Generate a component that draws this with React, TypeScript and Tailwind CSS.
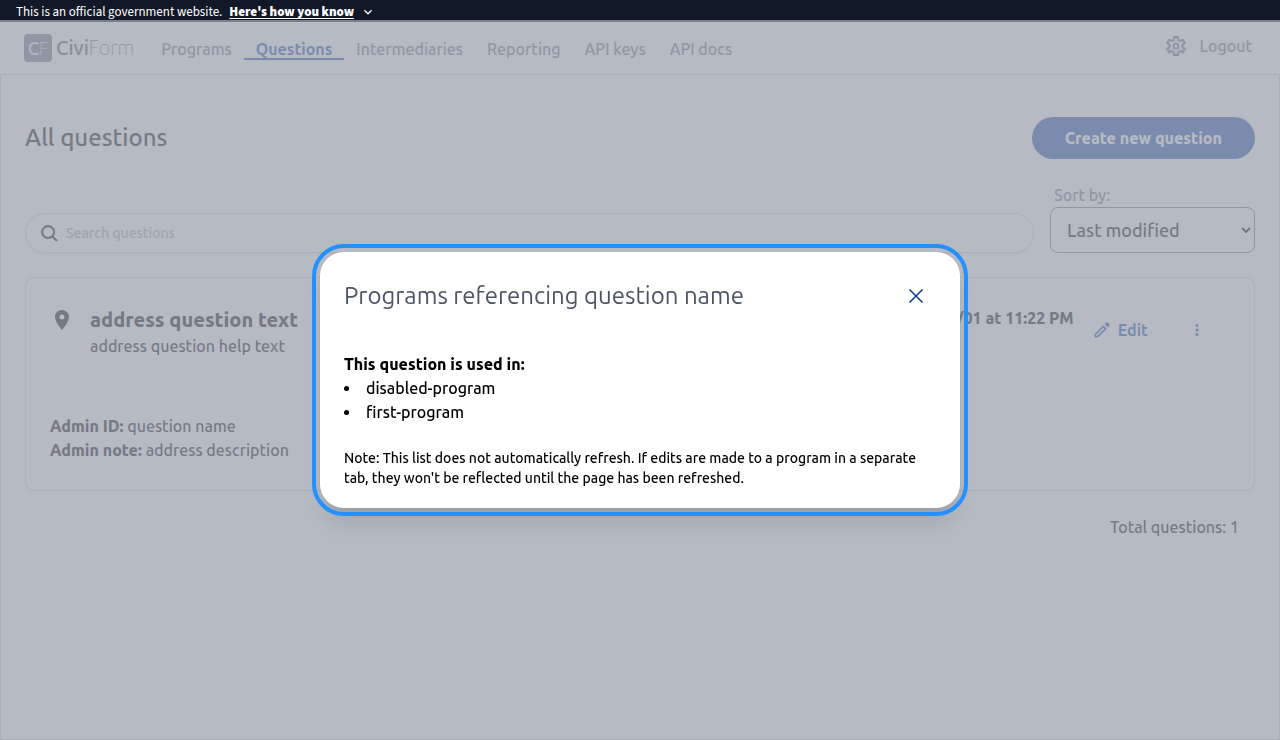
import React from "react";
import { MdPlace, MdMoreVert, MdKeyboardArrowDown } from "react-icons/md";

const NAV_ITEMS = ["Programs", "Questions", "Intermediaries", "Reporting", "API keys", "API docs"];

function GovernmentBanner() {
  return (
    <div className="flex h-[22px] items-start gap-[7px] bg-[#111827] px-4 pt-[2px] font-['Source_Sans_Pro','Source_Sans_3','Noto_Sans_CJK_SC',sans-serif] text-[13px] leading-[20px] font-normal text-white">
      <span>This is an official government website.</span>
      <button type="button" className="flex items-center gap-[6px] font-black">
        <span className="underline underline-offset-2">Here's how you know</span>
        <MdKeyboardArrowDown className="size-4" />
      </button>
    </div>
  );
}

function Logo() {
  return (
    <a href="#" aria-label="CiviForm" className="flex items-center gap-1">
      <span className="flex size-7 items-center justify-center rounded-sm bg-[#6b7280] text-lg font-medium text-gray-100">
        C<span className="font-thin">F</span>
      </span>
      <span className="text-xl font-medium text-[#4b5563]">
        Civi<span className="font-thin">Form</span>
      </span>
    </a>
  );
}

function GearIcon() {
  return (
    <svg viewBox="0 0 24 24" className="size-6" fill="currentColor" aria-hidden="true">
      <path
        fillRule="evenodd"
        stroke="currentColor"
        strokeWidth=".3"
        strokeLinejoin="round"
        d="m9.25 22-.4-3.2q-.325-.125-.612-.3-.288-.175-.563-.375L4.7 19.375l-2.75-4.75 2.575-1.95Q4.5 12.5 4.5 12.337v-.675q0-.162.025-.337L1.95 9.375l2.75-4.75 2.975 1.25q.275-.2.575-.375.3-.175.6-.3l.4-3.2h5.5l.4 3.2q.325.125.613.3.287.175.562.375l2.975-1.25 2.75 4.75-2.575 1.95q.025.175.025.337v.675q0 .163-.05.338l2.575 1.95-2.75 4.75-2.95-1.25q-.275.2-.575.375-.3.175-.6.3l-.4 3.2ZM11 20h1.975l.35-2.65q.775-.2 1.438-.588.662-.387 1.212-.937l2.475 1.025.975-1.7-2.15-1.625q.125-.35.175-.738.05-.387.05-.787t-.05-.788q-.05-.387-.175-.737l2.15-1.625-.975-1.7-2.475 1.05q-.55-.575-1.212-.963-.663-.387-1.438-.587L13 4h-1.975l-.35 2.65q-.775.2-1.437.587-.663.388-1.213.938L5.55 7.15l-.975 1.7 2.15 1.6q-.125.375-.175.75-.05.375-.05.8 0 .4.05.775t.175.75l-2.15 1.625.975 1.7 2.475-1.05q.55.575 1.213.963.662.387 1.437.587Z"
      />
      <circle cx="12" cy="12" r="2.5" fill="none" stroke="currentColor" strokeWidth="2" />
    </svg>
  );
}

function PencilIcon() {
  return (
    <svg viewBox="0 0 24 24" className="size-5" fill="currentColor" aria-hidden="true">
      <path
        d="M5 19h1.4l8.625-8.625-1.4-1.4L5 17.6ZM19.3 8.925l-4.25-4.2 1.4-1.4q.575-.575 1.413-.575.837 0 1.412.575l1.4 1.4q.575.575.6 1.388.025.812-.55 1.387ZM17.85 10.4 7.25 21H3v-4.25l10.6-10.6Z"
        fillRule="evenodd"
      />
    </svg>
  );
}

function SearchIcon() {
  return (
    <svg viewBox="0 0 18 18" className="size-[17px]" fill="none" stroke="currentColor" strokeWidth="2.2" aria-hidden="true">
      <circle cx="7.5" cy="7.5" r="6.3" />
      <path d="m12 12 5 5" />
    </svg>
  );
}

function CloseIcon() {
  return (
    <svg viewBox="0 0 24 24" className="size-6" fill="none" stroke="currentColor" strokeWidth="1.6" aria-hidden="true">
      <path d="M5.5 5.5l13 13M18.5 5.5l-13 13" />
    </svg>
  );
}

function Header() {
  return (
    <header className="flex h-[52px] items-center justify-between bg-white px-6 text-[#6b7280] shadow-sm">
      <div className="flex items-center gap-[15px]">
        <Logo />
        <nav className="flex items-center pt-1">
          {NAV_ITEMS.map((item) => (
            <a
              key={item}
              href="#"
              className={
                item === "Questions"
                  ? "border-b-2 border-[#1444ac] px-3 leading-[18px] font-semibold text-[#1444ac]"
                  : "border-b-2 border-transparent px-3 leading-[18px]"
              }
            >
              {item}
            </a>
          ))}
        </nav>
      </div>
      <div className="flex items-center gap-3 pr-1 pb-1">
        <button type="button" aria-label="Settings">
          <GearIcon />
        </button>
        <a href="#">Logout</a>
      </div>
    </header>
  );
}

function QuestionCard() {
  return (
    <article className="mt-6 flex justify-between rounded-lg border border-[#d1d5db] px-6 py-7">
      <div>
        <div className="flex gap-4">
          <MdPlace className="mt-[2px] size-6" />
          <div>
            <h2 className="text-xl leading-7 font-extrabold">address question text</h2>
            <p>address question help text</p>
          </div>
        </div>
        <p className="mt-14">
          <b className="font-extrabold">Admin ID:</b> question name
        </p>
        <p>
          <b className="font-extrabold">Admin note:</b> address description
        </p>
      </div>
      <div className="flex items-start pr-6">
        <p className="font-extrabold">Last edited: 2030/01/01 at 11:22 PM</p>
        <button type="button" className="mt-3 ml-[18px] flex items-center gap-[6px] font-semibold text-[#1444ac]">
          <PencilIcon />
          Edit
        </button>
        <button type="button" aria-label="More actions" className="mt-[15px] ml-10 text-[#1444ac]">
          <MdMoreVert className="size-[18px]" />
        </button>
      </div>
    </article>
  );
}

function ReferencesModal() {
  return (
    <div className="fixed inset-x-0 top-5 bottom-0 flex items-center justify-center bg-[#9ca3afbf]">
      <div
        role="dialog"
        aria-modal="true"
        aria-labelledby="modal-title"
        className="w-1/2 rounded-3xl bg-white px-6 pt-6 pb-5 text-black shadow-xl outline-4 outline-offset-4 outline-[#2491ff]"
      >
        <div className="flex items-center justify-between">
          <h2 id="modal-title" className="text-2xl leading-10 font-normal text-[#4b5563]">
            Programs referencing question name
          </h2>
          <button type="button" aria-label="Close" className="p-2 text-[#113f9f]">
            <CloseIcon />
          </button>
        </div>
        <p className="mt-9 font-extrabold">This question is used in:</p>
        <ul className="list-inside list-disc">
          <li>disabled-program</li>
          <li>first-program</li>
        </ul>
        <p className="mt-6 pr-3 text-sm leading-5">
          Note: This list does not automatically refresh. If edits are made to a program in a separate tab, they won't be
          reflected until the page has been refreshed.
        </p>
      </div>
    </div>
  );
}

export default function App() {
  return (
    <div className="flex min-h-screen flex-col bg-white font-['Ubuntu','Noto_Sans',sans-serif] text-base font-medium text-black">
      <GovernmentBanner />
      <Header />
      <main className="flex-1 border border-[#d1d5db] px-6 pt-[42px]">
        <div className="flex items-center justify-between">
          <h1 className="text-2xl font-medium">All questions</h1>
          <button type="button" className="h-[42px] rounded-full bg-[#1444ac] px-[33px] font-extrabold text-white">
            Create new question
          </button>
        </div>
        <div className="mt-6 flex items-end gap-4">
          <label className="flex h-10 flex-1 items-center gap-2 rounded-full border border-[#d1d5db] px-[15px] shadow-sm">
            <SearchIcon />
            <input
              type="text"
              aria-label="Search questions"
              placeholder="Search questions"
              className="flex-1 text-sm outline-none placeholder:text-[#9ca3af]"
            />
          </label>
          <div className="flex w-[205px] flex-col">
            <label htmlFor="sort" className="px-1 text-[#6b7280]">
              Sort by:
            </label>
            <select id="sort" className="h-[46px] rounded-lg border border-[#6b7280] bg-white px-3 text-lg">
              <option>Last modified</option>
              <option>Admin ID A-Z</option>
            </select>
          </div>
        </div>
        <QuestionCard />
        <p className="mt-6 pr-4 text-right">Total questions: 1</p>
      </main>
      <ReferencesModal />
    </div>
  );
}
